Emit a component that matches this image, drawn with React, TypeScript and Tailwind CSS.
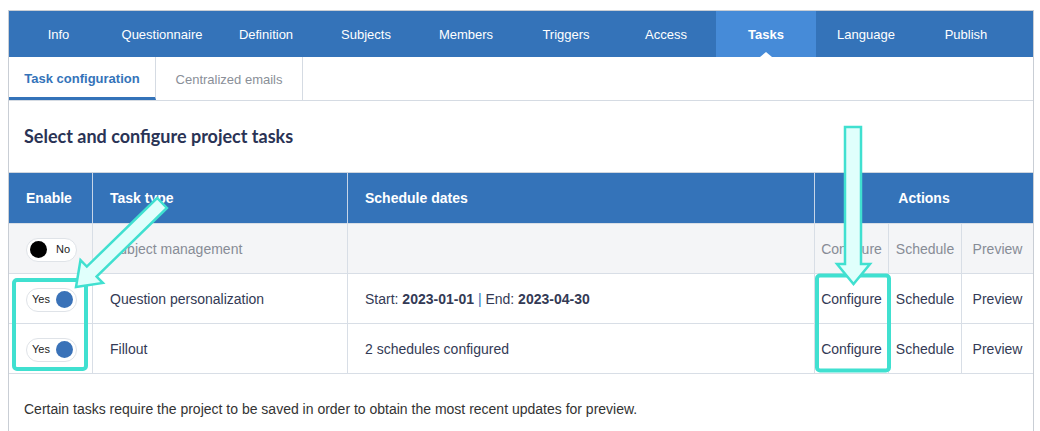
const navItems = [
    { label: 'Info', w: 'w-[99px]' },
    { label: 'Questionnaire', w: 'w-[108px]' },
    { label: 'Definition', w: 'w-[100px]' },
    { label: 'Subjects', w: 'w-[100px]' },
    { label: 'Members', w: 'w-[100px]' },
    { label: 'Triggers', w: 'w-[100px]' },
    { label: 'Access', w: 'w-[100px]' },
    { label: 'Tasks', w: 'w-[100px]' },
    { label: 'Language', w: 'w-[100px]' },
    { label: 'Publish', w: 'w-[100px]' },
];

type Row = {
    enabled: boolean;
    name: string;
    schedule: React.ReactNode;
    muted?: boolean;
};

const rows: Row[] = [
    { enabled: false, name: 'Subject management', schedule: '', muted: true },
    {
        enabled: true,
        name: 'Question personalization',
        schedule: (
            <span>
                Start: <b>2023-01-01</b> <span className="text-[#3473b9]">|</span> End: <b>2023-04-30</b>
            </span>
        ),
    },
    { enabled: true, name: 'Fillout', schedule: '2 schedules configured' },
];

function Toggle({ on }: { on: boolean }) {
    return (
        <div className="flex h-[24px] w-[51px] items-center justify-between rounded-full border border-[#dfe3e8] bg-white px-[3px] text-[11px] text-[#222]">
            {on ? (
                <>
                    <span className="pl-[2px]">Yes</span>
                    <span className="h-[17px] w-[17px] rounded-full bg-[#3a72b8]" />
                </>
            ) : (
                <>
                    <span className="h-[17px] w-[17px] rounded-full bg-black" />
                    <span className="pr-[3px]">No</span>
                </>
            )}
        </div>
    );
}

export default function App() {
    return (
        <div className="relative h-[431px] w-[1040px] overflow-hidden bg-white pt-[10px] font-['Liberation_Sans',Arial,sans-serif] text-[14px] text-[#333a55]">
            <div className="ml-[8px] w-[1026px] border-x border-t border-[#c9ced5]">
                {/* top nav */}
                <nav className="flex h-[46px] bg-[#3473b9] text-[13px] text-white">
                    {navItems.map((item) => (
                        <div
                            key={item.label}
                            className={
                                item.label === 'Tasks'
                                    ? `relative flex ${item.w} items-center justify-center bg-[#468bd8] pt-[2px] font-bold`
                                    : `flex ${item.w} items-center justify-center pt-[2px]`
                            }
                        >
                            {item.label}
                            {item.label === 'Tasks' && (
                                <span className="absolute bottom-0 left-1/2 h-0 w-0 -translate-x-1/2 border-x-[6px] border-b-[5px] border-x-transparent border-b-white" />
                            )}
                        </div>
                    ))}
                </nav>

                {/* sub tabs */}
                <div className="flex h-[44px] border-b border-[#d5dbe3] text-[13px]">
                    <div className="flex w-[147px] items-center justify-center border-b-[3px] border-r border-b-[#3473b9] border-r-[#d5dbe3] pt-[4px] font-bold text-[#3473b9]">
                        Task configuration
                    </div>
                    <div className="flex w-[147px] items-center justify-center border-r border-[#d5dbe3] pt-[2px] text-[#8a8f98]">Centralized emails</div>
                </div>

                <h1 className="flex h-[71px] items-center pl-[15px] font-['Lato',sans-serif] text-[18px] font-bold text-[#2a3355]">
                    Select and configure project tasks
                </h1>

                {/* table */}
                <div className="grid grid-cols-[84px_255px_467px_74px_73px_71px] border-t border-[#cfd6df]">
                    <div className="flex h-[50px] items-center border-r border-[#c7d5e8] bg-[#3473b9] pl-[17px] font-bold text-white">Enable</div>
                    <div className="flex h-[50px] items-center border-r border-[#c7d5e8] bg-[#3473b9] pl-[17px] font-bold text-white">Task type</div>
                    <div className="flex h-[50px] items-center border-r border-[#c7d5e8] bg-[#3473b9] pl-[17px] font-bold text-white">Schedule dates</div>
                    <div className="col-span-3 flex h-[50px] items-center justify-center bg-[#3473b9] font-bold text-white">Actions</div>

                    {rows.map((row) => {
                        const cell = `flex h-[50px] items-center border-t border-[#d8dee6] pt-[2px] ${row.muted ? 'bg-[#f4f5f7] text-[#878c96]' : 'bg-white'}`;
                        return (
                            <div key={row.name} className="contents">
                                <div className={`${cell} border-r pl-[17px]`}>
                                    <Toggle on={row.enabled} />
                                </div>
                                <div className={`${cell} border-r pl-[17px]`}>{row.name}</div>
                                <div className={`${cell} border-r pl-[17px]`}>{row.schedule}</div>
                                <div className={`${cell} justify-center border-r`}>Configure</div>
                                <div className={`${cell} justify-center border-r`}>Schedule</div>
                                <div className={`${cell} justify-center`}>Preview</div>
                            </div>
                        );
                    })}
                </div>

                <p className="border-t border-[#d8dee6] pl-[15px] pt-[25px] pb-[30px] text-[#333]">
                    Certain tasks require the project to be saved in order to obtain the most recent updates for preview.
                </p>
            </div>

            {/* annotations */}
            <svg className="pointer-events-none absolute left-0 top-0" width="1040" height="431" viewBox="0 0 1040 431">
                <rect x="14" y="280" width="72" height="89" rx="3" fill="none" stroke="#40e0d0" strokeWidth="4" />
                <rect x="817" y="275.5" width="72" height="95" rx="3" fill="none" stroke="#40e0d0" strokeWidth="4" />
                <polygon
                    points="166.9,208 96.6,276.6 102.9,283 76,287 80.5,260.2 86.8,266.6 157.1,198"
                    fill="#e0fffc"
                    stroke="#40e0d0"
                    strokeWidth="2.5"
                    strokeLinejoin="miter"
                />
                <polygon
                    points="845,127 861,127 861,264 870,264 853.5,284 837,264 845,264"
                    fill="#e0fffc"
                    stroke="#40e0d0"
                    strokeWidth="2.5"
                    strokeLinejoin="miter"
                />
            </svg>
        </div>
    );
}
